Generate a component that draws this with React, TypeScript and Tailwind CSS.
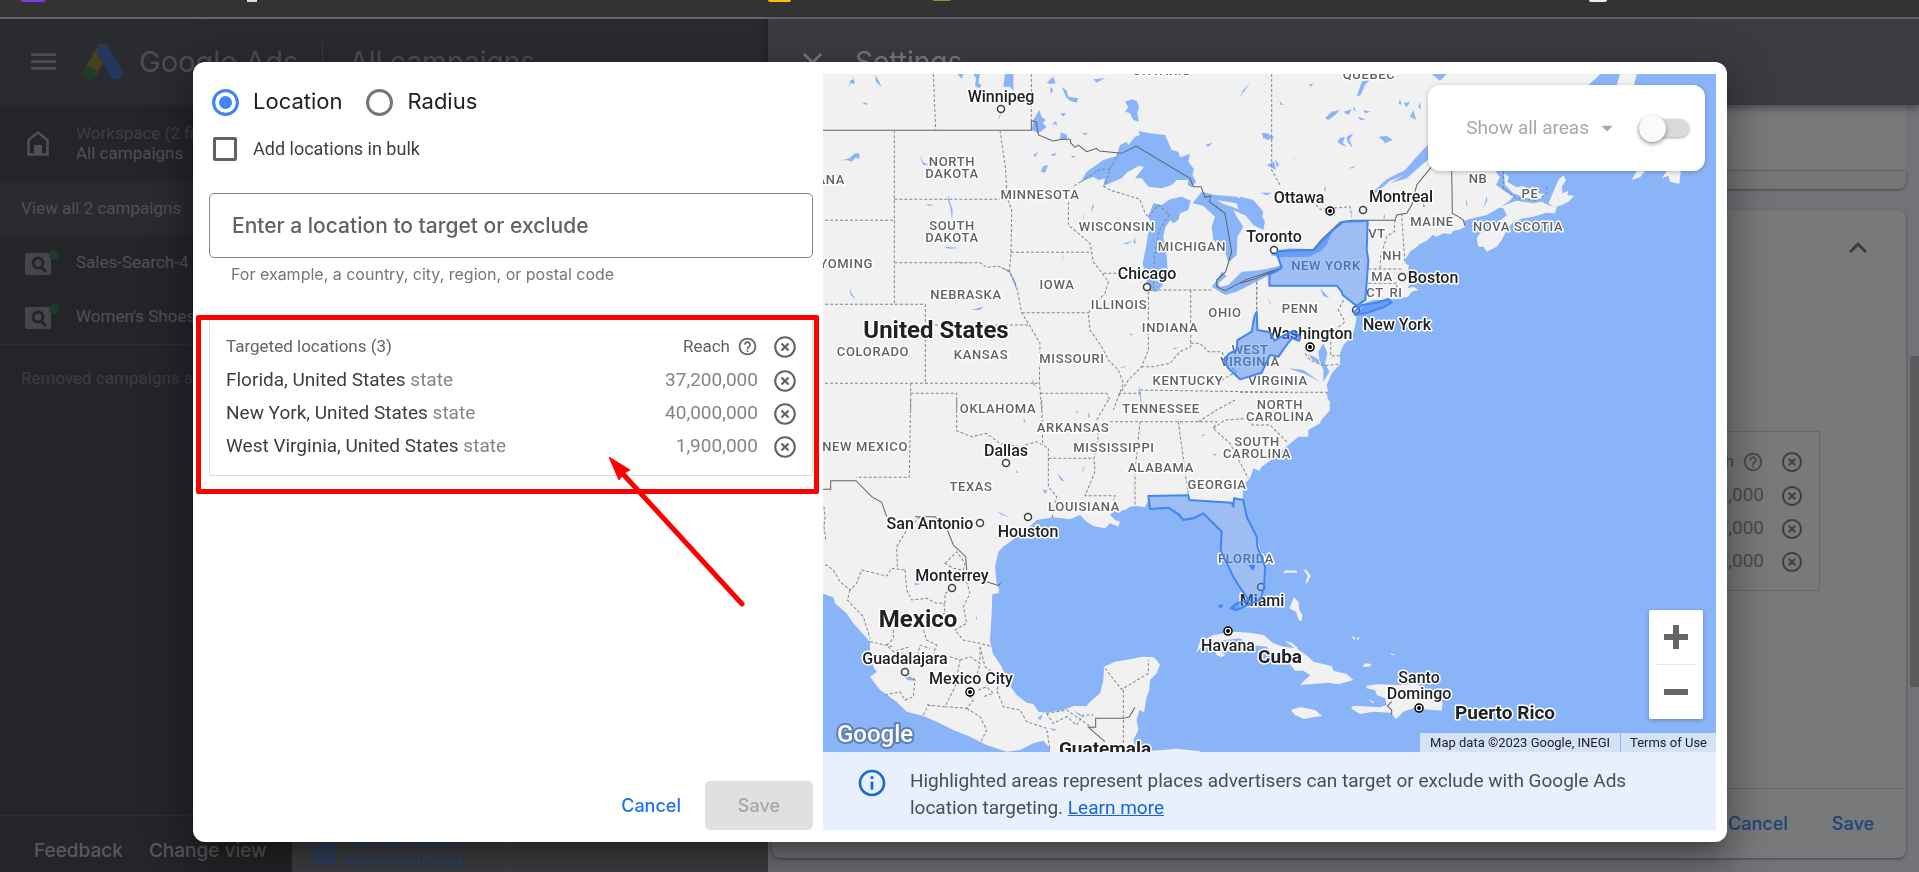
import { useState } from 'react'
import type { ReactNode } from 'react'
import {
	MdArrowDropDown,
	MdClose,
	MdExpandLess,
	MdHelpOutline,
	MdHighlightOff,
	MdInfoOutline,
	MdMenu,
} from 'react-icons/md'

type Label = { text: string; x: number; y: number; kind?: 'city' | 'island' | 'country'; anchor?: 'start' | 'middle' | 'end' }

const targeted = [
	{ name: 'Florida, United States', reach: '37,200,000' },
	{ name: 'New York, United States', reach: '40,000,000' },
	{ name: 'West Virginia, United States', reach: '1,900,000' },
]

const labels: Label[] = [
	{ text: 'QUEBEC', x: 546, y: 5 },
	{ text: 'ONTARIO', x: 339, y: 1 },
	{ text: 'MONTANA', x: 22, y: 110, anchor: 'end' },
	{ text: 'NORTH', x: 129, y: 92 },
	{ text: 'DAKOTA', x: 129, y: 104 },
	{ text: 'MINNESOTA', x: 217, y: 125 },
	{ text: 'SOUTH', x: 129, y: 156 },
	{ text: 'DAKOTA', x: 129, y: 168 },
	{ text: 'WISCONSIN', x: 294, y: 157 },
	{ text: 'MICHIGAN', x: 369, y: 177 },
	{ text: 'WYOMING', x: 50, y: 194, anchor: 'end' },
	{ text: 'IOWA', x: 234, y: 215 },
	{ text: 'NEBRASKA', x: 143, y: 225 },
	{ text: 'ILLINOIS', x: 296, y: 235 },
	{ text: 'OHIO', x: 402, y: 243 },
	{ text: 'INDIANA', x: 347, y: 258 },
	{ text: 'COLORADO', x: 50, y: 282 },
	{ text: 'KANSAS', x: 158, y: 285 },
	{ text: 'MISSOURI', x: 249, y: 289 },
	{ text: 'WEST', x: 427, y: 280 },
	{ text: 'VIRGINIA', x: 427, y: 292 },
	{ text: 'KENTUCKY', x: 365, y: 311 },
	{ text: 'VIRGINIA', x: 455, y: 311 },
	{ text: 'OKLAHOMA', x: 175, y: 339 },
	{ text: 'TENNESSEE', x: 338, y: 339 },
	{ text: 'ARKANSAS', x: 250, y: 358 },
	{ text: 'NEW MEXICO', x: 85, y: 377, anchor: 'end' },
	{ text: 'MISSISSIPPI', x: 291, y: 378 },
	{ text: 'ALABAMA', x: 338, y: 398 },
	{ text: 'GEORGIA', x: 394, y: 415 },
	{ text: 'TEXAS', x: 148, y: 417 },
	{ text: 'LOUISIANA', x: 261, y: 437 },
	{ text: 'NORTH', x: 457, y: 335 },
	{ text: 'CAROLINA', x: 457, y: 347 },
	{ text: 'SOUTH', x: 434, y: 372 },
	{ text: 'CAROLINA', x: 434, y: 384 },
	{ text: 'FLORIDA', x: 423, y: 489 },
	{ text: 'NEW YORK', x: 503, y: 196 },
	{ text: 'PENN', x: 477, y: 239 },
	{ text: 'MAINE', x: 609, y: 152 },
	{ text: 'VT', x: 554, y: 164 },
	{ text: 'NH', x: 569, y: 186 },
	{ text: 'MA', x: 559, y: 207 },
	{ text: 'CT', x: 552, y: 223 },
	{ text: 'RI', x: 573, y: 223 },
	{ text: 'NB', x: 655, y: 109 },
	{ text: 'PE', x: 707, y: 124 },
	{ text: 'NOVA SCOTIA', x: 695, y: 157 },
	{ text: 'Winnipeg', x: 178, y: 28, kind: 'city' },
	{ text: 'Chicago', x: 324, y: 205, kind: 'city' },
	{ text: 'Toronto', x: 451, y: 168, kind: 'city' },
	{ text: 'Ottawa', x: 476, y: 129, kind: 'city' },
	{ text: 'Montreal', x: 578, y: 128, kind: 'city' },
	{ text: 'Boston', x: 610, y: 209, kind: 'city' },
	{ text: 'New York', x: 574, y: 256, kind: 'city' },
	{ text: 'Washington', x: 487, y: 265, kind: 'city' },
	{ text: 'Dallas', x: 183, y: 382, kind: 'city' },
	{ text: 'San Antonio', x: 107, y: 455, kind: 'city' },
	{ text: 'Houston', x: 205, y: 463, kind: 'city' },
	{ text: 'Monterrey', x: 129, y: 507, kind: 'city' },
	{ text: 'Guadalajara', x: 82, y: 590, kind: 'city' },
	{ text: 'Mexico City', x: 148, y: 610, kind: 'city' },
	{ text: 'Miami', x: 439, y: 532, kind: 'city' },
	{ text: 'Havana', x: 405, y: 577, kind: 'city' },
	{ text: 'Santo', x: 596, y: 609, kind: 'city' },
	{ text: 'Domingo', x: 596, y: 625, kind: 'city' },
	{ text: 'Cuba', x: 457, y: 589, kind: 'island' },
	{ text: 'Puerto Rico', x: 682, y: 645, kind: 'island' },
	{ text: 'Guatemala', x: 282, y: 681, kind: 'island' },
	{ text: 'United States', x: 113, y: 264, kind: 'country' },
	{ text: 'Mexico', x: 95, y: 553, kind: 'country' },
]

const towns = [
	[178, 35], [324, 213], [451, 176], [540, 136], [579, 203], [533, 236], [183, 389],
	[157, 449], [205, 443], [129, 514], [82, 598], [438, 513],
]

const capitals = [[507, 137], [487, 273], [147, 618], [405, 557], [596, 634]]

const labelStyle = {
	state: 'fill-[#5f6368] text-[13px] font-medium tracking-wider',
	city: 'fill-[#202124] text-[16px] font-medium',
	island: 'fill-[#202124] text-[19px] font-bold',
	country: 'fill-[#202124] text-[24px] font-bold',
}

// The map is drawn in four sheets at triple scale, each with its own origin
const sheets = {
	nw: 'scale(.33333) translate(-9 -12)',
	ne: 'scale(.33333) translate(1251 -12)',
	sw: 'scale(.33333) translate(-9 978)',
	se: 'scale(.33333) translate(1131 978)',
}

const MapDrawing = () => (
	<svg viewBox="0 0 893 678" preserveAspectRatio="xMinYMin slice" className="absolute inset-0 h-full w-full bg-[#8ab4f8]" role="img" aria-label="Map of targeted locations">
		<g fill="#f1f1f1">
			<path transform={sheets.nw} d="M0 0H1400V1030H0Z" />
			<path transform={sheets.ne} d="M0 0H1090L1075 18 1045 45 700 140 575 210 565 225 545 268 500 310 450 340 500 325 545 285 600 240 740 290 765 303 780 322 768 345 792 362 820 380 805 395 775 415 740 435 690 447 672 452 677 470 655 480 640 482 632 492 610 490 590 500 578 495 560 512 540 522 528 532 510 545 495 570 497 582 507 585 500 615 510 640 503 655 520 650 535 660 515 665 505 680 480 685 440 690 400 690 375 700 365 715 350 735 345 770 335 800 310 825 300 850 300 883 275 910 260 945 265 967 232 985 270 992 268 1020 225 1030 245 1045 240 1060 205 1080V1100H0Z" />
			<path transform={sheets.ne} d="M775 412L830 392 880 400 905 395 925 405 950 412 945 430 920 428 880 440 850 445 820 455 800 480 785 510 770 530 740 545 730 530 715 530 710 505 720 490 760 470 800 435 790 415Z" />
			<path transform={sheets.ne} d="M970 316L978 330 965 350 968 370 985 362 982 375 1002 378 985 395 965 405 945 412 925 400 940 365 955 330ZM792 310L806 320 802 336 830 352 850 348 862 362 890 370 915 372 900 388 860 385 820 370 795 345ZM1140 12H1190L1182 45H1130ZM1215 303L1200 322 1175 330 1190 303ZM1280 303H1322L1318 342 1290 335 1285 318 1265 325Z" />
			<path transform={sheets.sw} d="M0 -20H1520L1530 30 1495 70 1460 90 1430 115 1405 135 1380 155 1360 175 1325 200 1318 212 1300 205 1290 235 1270 255 1268 300 1280 350 1310 410 1318 440 1335 500 1332 560 1320 600 1290 608 1285 595 1255 550 1235 525 1215 490 1202 450 1205 395 1185 370 1145 340 1120 350 1090 358 1080 340 1045 322 990 325 985 300 975 322 950 318 930 320 915 330 880 335 870 345 885 360 900 365 895 380 870 370 855 385 820 378 800 365 780 345 750 358 700 352 650 360 640 370 610 395 570 425 545 445 535 455 525 500 530 550 538 570 535 580 517 583 515 640 510 720 518 760 545 800 560 840 575 865 590 885 620 908 640 912 655 935 680 938 730 930 760 918 800 918 810 905 840 880 850 840 852 800 885 785 930 778 965 770 1000 772 1008 778 1020 795 1010 820 990 840 988 870 980 890 972 937 958 930 950 960 955 990 940 1020 945 1040 1000 1052 1070 1046 1140 1054V1070H690L690 1045 670 1022 640 1030 600 1050 560 1055 500 1035 450 1010 400 990 350 965 310 948 260 935 230 905 180 870 150 830 170 815 160 800 150 760 150 725 100 670 80 640 45 610 40 592 0 578Z" />
			<path transform={sheets.se} d="M-12 760L0 725 40 705 100 695 150 698 190 705 220 730 250 740 290 745 325 770 340 785 395 798 400 812 440 822 460 840 415 853 385 848 300 855 330 825 310 812 285 812 265 785 215 760 200 740 150 735 120 715 60 722 45 735 75 765 65 772 50 765 40 740 0 745ZM272 930L300 921 345 930 367 948 330 953 312 957 285 945ZM498 858L530 853 600 855 640 850 670 862 700 885 728 905 725 932 700 930 640 925 610 935 588 958 572 938 520 935 480 942 453 925 460 917 540 922 560 915 555 895 530 885 525 870 500 865ZM248 520L258 511 292 512 290 518 260 518ZM310 508L322 512 332 528 320 552 317 545 323 528ZM282 592L295 605 298 630 307 645 305 662 297 662 288 635 268 625ZM453 708L468 715 463 720ZM470 714L478 712 476 722ZM487 800L495 790 515 792 508 800ZM570 760L587 764 575 765ZM505 898L523 906 518 910ZM253 722L275 728 295 745 285 745Z" />
		</g>

		<g fill="#8ab4f8">
			<path transform={sheets.nw} d="M783 335L800 305 850 270 890 258 900 225 920 215 925 225 945 200 960 195 955 183 990 190 1035 195 1055 240 1075 245 1080 262 1110 252 1105 275 1122 298 1117 315 1128 335 1115 352 1103 345 1105 330 1070 330 1055 345 1025 355 985 350 965 325 945 325 972 290 955 288 920 308 905 325 850 348 855 325 835 330 820 320Z" />
			<path transform={sheets.nw} d="M985 662L968 580 980 520 990 450 985 440 1000 400 1025 405 1050 388 1085 380 1112 392 1105 420 1080 430 1075 450 1060 460 1050 450 1035 475 1030 500 1040 560 1043 600 1028 645 1010 665ZM1118 400L1145 365 1185 375 1250 380 1290 398 1300 415 1318 425 1335 455 1330 480 1300 465 1275 435 1240 420 1250 440 1270 470 1252 500 1250 555 1225 578 1215 545 1180 510 1175 470 1185 440 1150 408ZM1175 650L1195 625 1205 605 1220 618 1195 640 1200 650 1225 645 1265 605 1330 600 1385 585V598L1330 625 1290 645 1250 665 1215 675Z" />
			<path transform={sheets.nw} d="M915 95L935 88 950 92 957 110 952 130 957 155 940 150 930 130 915 125 925 112ZM413 12H430L425 27ZM460 12H480L475 40 485 45 478 55 465 48 468 25ZM555 12H580V62L570 50 550 50ZM545 118L540 140 533 152ZM640 150L658 120 665 140 677 150 668 160 680 170 655 190 635 180ZM725 50L740 62 745 80 775 85 770 98 750 92 738 82ZM680 38L700 20 707 40 690 42ZM690 50L700 60 692 72ZM720 130L738 130 730 140ZM695 165L708 152 712 168 705 162ZM722 187L742 195 740 210 720 208ZM785 190L802 188 798 196ZM820 28L855 25 830 38ZM125 98L142 98 140 106ZM85 52L92 30 105 28 88 20 102 25 104 42 92 40ZM165 15L175 30 185 52 168 35ZM60 272L88 265 105 250 118 250V268L108 262 95 275 80 270ZM300 255L308 275 325 285 310 285 303 270ZM384 375L388 390 398 420 396 450 391 410 384 392ZM315 402L342 404 330 408ZM372 530L420 534 385 536ZM640 255L655 245 645 262ZM662 305L670 288 685 285 675 308ZM690 255L708 248 705 258ZM752 258L768 258 760 264ZM818 402L822 408 812 430ZM790 425L792 450 789 440ZM910 520L938 512 920 523ZM945 500L947 522 940 518ZM725 548L732 570 728 565ZM540 590L570 602 588 640 590 662 570 610ZM405 572L440 582 420 580ZM452 720L490 710 480 720ZM88 650L95 670 108 690 92 675ZM635 925L648 950 640 945ZM900 893L922 886 910 893ZM955 945L962 970 966 1010 957 970ZM1055 835L1075 832 1065 838ZM930 790L938 792 932 798ZM1255 85L1290 38 1265 75ZM1325 188L1362 200 1355 206 1330 205ZM1155 225L1178 218 1165 230ZM1320 368L1355 368 1340 376ZM1340 285L1362 275 1368 300Z" />
			<path transform={sheets.ne} d="M0 635L60 600 120 590 115 605 85 618 40 628 0 655ZM90 555L108 545 150 535 220 538 245 510 275 490 260 525 240 545 205 560 120 562ZM565 222L548 268 500 312 450 332 405 372 390 398 402 362 440 328 495 300 530 260ZM350 80L365 35 400 18 375 45 362 75ZM575 12H620L600 32ZM65 190H85L90 200 103 205 80 210ZM415 200L440 198 458 210 435 220 430 212ZM325 295L345 288 340 295ZM475 100L480 88 485 105ZM490 100L510 95 500 112ZM505 150L520 120 528 150 512 140ZM540 95L542 120 535 110ZM292 215L300 205 315 200 308 218 320 230 305 225ZM320 200L340 190 328 210 335 225 338 235 322 215ZM255 145L275 125 300 120 285 135 265 150ZM310 125L335 118 325 135ZM340 105L348 125 340 120ZM355 140L378 148 360 150ZM370 120L392 125 375 130ZM205 45L220 40 212 50ZM118 92L130 105 122 105ZM100 55L125 105 108 72ZM0 70L30 38 12 62ZM0 380L40 390 70 425 60 470 30 440 0 430ZM105 268L118 285 110 290ZM162 260L165 265 163 270ZM255 345L258 365 252 360ZM550 390L555 410 548 412ZM432 430L436 440 430 450ZM678 385L683 410 678 405ZM740 378L742 390 730 415ZM250 820L262 850 255 880 268 905 250 935 250 900 238 870 235 845ZM205 852L235 868 240 885 215 868ZM145 895L190 900 240 935 195 912ZM240 655L268 685 250 678ZM82 682L95 705 88 698Z" />
			<path transform={sheets.sw} d="M668 268L682 272 675 282ZM712 220L735 245 722 240ZM785 215L797 193 790 212ZM528 332L568 352 545 345ZM610 50L618 68 612 66ZM765 35L778 35 770 40ZM805 35L810 48 804 55ZM588 210L595 218 588 218ZM1145 105L1155 102 1148 110ZM1178 162H1190L1185 168ZM283 550L305 552 285 556ZM468 645L472 660 468 658ZM255 832L285 835 282 842 262 840ZM318 910L340 920 322 916ZM652 955L668 942 662 960ZM688 985L712 988 700 992ZM760 930L800 955 775 945ZM548 440L568 430 555 445Z" />
		</g>
		<path transform={sheets.nw} fill="#f1f1f1" d="M1190 390L1250 400 1255 418 1235 410 1210 402Z" />

		<g fill="none" stroke="#5f6368" strokeWidth="3">
			<path transform={sheets.nw} d="M0 181H634V152L648 155 655 195 700 213 725 208 750 208 752 218 765 232 775 225 800 245 830 235 838 243 905 250 948 228 1110 325 1120 350 1143 350 1155 382 1172 378 1168 395 1215 430 1235 545 1217 605 1190 630V650L1215 662 1280 628 1380 595" />
			<path transform={sheets.ne} d="M0 640L40 628 122 595M110 545L220 538 243 510 300 457 335 451H465L470 435 500 430 515 405 530 345 575 290M635 303L637 430 655 440 670 450 675 468" />
			<path transform={sheets.sw} d="M0 268H32V242H108L155 290 185 307 200 350M285 350L345 350 380 385 400 435 437 470 440 510M500 545L535 556 542 550M855 1025L805 982H827V955H912L928 950 945 922" />
			<path transform={sheets.se} d="M575 905L562 918 575 930 575 945" />
		</g>

		<g fill="none" stroke="#80868b" strokeWidth="3" strokeDasharray="9 6">
			<path transform={sheets.nw} d="M340 12L347 180M634 12V150M223 181V703M0 451H223M223 388H545M540 181L556 290 562 385 575 420 573 547 568 605 590 650 605 728 628 765 660 820 658 940 661 970 665 1020M573 547H815L820 575 865 635 855 670 820 705 805 730 810 780 845 830 865 870 895 900 910 940 895 980 880 1020M223 578H480L500 592 535 588 568 605M0 703H316V940M345 765H625M605 728H805M0 940H660M272 940V1020M272 970H410V1020M661 970H860L870 990M783 335L765 345 745 400 745 465 810 520 820 575M850 348L870 360 960 388 975 430 985 440M985 665V840L965 890 925 930 895 980M1112 660V830L1080 845 1050 880 1000 890 965 890M985 660H1180M850 610H900M1310 620V725M1112 820L1140 820 1165 845 1205 845 1225 880M895 970H960V960L1400 967M895 250L870 298 855 345M870 298H840L783 335M985 440L1015 405 1048 435 1018 480 1003 560 1000 655M1355 12V300L1380 345M1225 885L1250 905 1195 935" />
			<path transform={sheets.ne} d="M228 405L240 418 330 410 335 440M50 620V725M485 430L487 470 495 580M465 450L462 485 440 500 422 560 420 595M385 597H490M385 640H470V660M310 690L295 720 315 755 290 775M272 800L272 857H300M0 967H268M195 850L210 870 250 887 295 883M790 303L790 355 830 385 890 392 920 370V345" />
			<path transform={sheets.sw} d="M272 0L268 232H108M410 0V92L455 110 500 100 540 130 600 140 650 125 685 145M665 0L668 130M685 145V260L710 290 695 358M685 175H822M865 0L830 60 835 110 822 175 825 215 795 287H885L880 310 900 330M870 65H1190L1180 85 1230 130 1285 235M960 65L945 215V320M1075 65L1105 285M1180 85L1215 60 1290 55 1297 75H1350L1405 130M1135 65L1190 30 1245 0" />
			<path transform={sheets.sw} d="M12 320L15 350 12 380 18 425M0 495H20L40 510 60 545 90 570 110 550 125 510 200 528 215 505 255 510M232 500L230 440 260 390 300 350M255 510L260 570 275 600 320 595 350 610 372 610 375 640 345 650M375 610V580L400 565M375 490L410 455 435 490 430 510 400 505ZM90 570L82 600 130 650 150 715M435 530L450 580 430 620 440 670 405 690 430 720 480 730 510 738M310 690L320 720 350 735 340 760M220 690V715L200 735 220 755 270 740M290 780L300 735 330 745M195 885L240 875 255 900 280 890 285 840 265 830M310 945L325 915 375 920 405 860 420 780 390 770M375 920L440 925 460 900 440 880M440 925L480 950 500 990 480 1030M420 780L450 770 480 790 470 830M480 740L495 800 545 835 530 870 550 920 600 930 620 965 680 985 690 1050M475 870L500 860 520 880 490 890M680 940L700 970 740 950 770 975 790 945 820 945M680 940L740 930 820 985M855 805L905 868 985 820V780M910 870V1030M150 725L220 740M480 740V780" />
		</g>

		{labels.map(({ text, x, y, kind = 'state', anchor = 'middle' }) => (
			<text key={`${text}${x}${y}`} x={x} y={y} textAnchor={anchor} stroke="#fff" strokeWidth="3" strokeLinejoin="round" paintOrder="stroke" className={labelStyle[kind]}>
				{text}
			</text>
		))}
		{towns.map(([x, y]) => (
			<circle key={`${x}-${y}`} cx={x} cy={y} r="3.5" fill="#fff" stroke="#3c4043" strokeWidth="1.5" />
		))}
		{capitals.map(([x, y]) => (
			<g key={`${x}-${y}`}>
				<circle cx={x} cy={y} r="4" fill="#fff" stroke="#000" strokeWidth="1.5" />
				<circle cx={x} cy={y} r="2" />
			</g>
		))}

		<g fill="#4285f4" fillOpacity=".48" stroke="#4285f4" strokeWidth="6" strokeLinejoin="round">
			<path transform={sheets.ne} d="M383 452L310 455 285 475 243 515 222 540 120 542 110 550 125 592 88 614V647H290L305 665 308 675 350 708 368 695 376 690 385 570 380 540ZM365 705L410 698 445 687 455 697 430 712 375 730 345 735 343 725Z" />
			<path transform={sheets.nw} d="M1310 725L1312 780 1350 787 1363 812 1385 800 1420 782 1440 800 1438 812 1415 805 1400 825 1375 860 1350 855 1325 908 1260 928 1225 895 1212 868 1228 850 1250 840 1252 810 1295 785 1303 740Z" />
			<path transform={sheets.sw} d="M985 288L1105 286 1108 300 1235 308 1240 320 1242 295 1270 300 1280 350 1310 410 1312 440 1335 500 1332 560 1322 598 1250 630 1232 625 1250 610 1285 600 1255 555 1240 530 1215 480 1202 450 1205 395 1150 340 1120 355 1090 360 1075 343 1045 323 990 327Z" />
			<path transform={sheets.sw} d="M1290 497L1302 497 1298 508ZM1197 618L1206 616 1203 621Z" />
		</g>
		<text x="14" y="668" stroke="#5f7fb5" strokeWidth="4" strokeLinejoin="round" paintOrder="stroke" className="fill-white text-[24px] font-medium">Google</text>
	</svg>
)

const Annotation = () => (
	<>
		<div className="pointer-events-none absolute -top-1 -right-[7px] -bottom-[19px] -left-[14px] rounded-xs border-5 border-[#ff0000]" />
		<svg viewBox="0 0 140 152" className="pointer-events-none absolute top-[138px] left-[399px] h-[152px] w-[140px]" aria-hidden="true">
			<path d="M14 17L133 147" stroke="#ff0000" strokeWidth="5" strokeLinecap="round" />
			<path d="M0 0L21 13 15 16 10 23Z" fill="#ff0000" stroke="#ff0000" />
		</svg>
	</>
)

const TargetedTable = () => (
	<table className="w-full text-[19px] text-[#3c4043]">
		<thead>
			<tr className="h-[35px] text-[17px] text-[#5f6368]">
				<th className="text-left font-normal">Targeted locations (3)</th>
				<th className="font-normal">
					<div className="flex items-center justify-end gap-[7px]">
						Reach
						<MdHelpOutline className="size-[21px]" />
					</div>
				</th>
				<th className="w-10">
					<button aria-label="Remove all" className="ml-[14px] flex">
						<MdHighlightOff className="size-[26px]" />
					</button>
				</th>
			</tr>
		</thead>
		<tbody>
			{targeted.map(({ name, reach }) => (
				<tr key={name} className="h-[33px]">
					<td>
						{name} <span className="text-[#80868b]">state</span>
					</td>
					<td className="text-right text-[#80868b]">{reach}</td>
					<td>
						<button aria-label={`Remove ${name}`} className="ml-[14px] flex text-[#5f6368]">
							<MdHighlightOff className="size-[26px]" />
						</button>
					</td>
				</tr>
			))}
		</tbody>
	</table>
)

const Choice = ({ label, checked, onChange }: { label: string; checked: boolean; onChange: () => void }) => (
	<label className="flex items-start gap-[14px] font-[Inter,sans-serif] text-[22px] leading-6 text-[#202124]">
		<input
			type="radio"
			name="mode"
			checked={checked}
			onChange={onChange}
			className="size-[27px] appearance-none rounded-full border-3 border-[#757575] checked:border-[#4285f4] checked:bg-[#4285f4] checked:shadow-[inset_0_0_0_4px_#fff]"
		/>
		{label}
	</label>
)

const LocationDialog = () => {
	const [mode, setMode] = useState('location')
	const [areas, setAreas] = useState(false)

	return (
		<div className="fixed inset-0 z-20 flex pt-[62px] pr-48 pb-[30px] pl-[193px]">
			<div role="dialog" aria-label="Locations" className="flex flex-1 rounded-xl bg-white shadow-[0_11px_15px_-7px_rgba(0,0,0,0.2),0_24px_38px_3px_rgba(0,0,0,0.2),0_9px_46px_8px_rgba(0,0,0,0.2)]">
				<section className="flex w-[41%] flex-col pt-[27px] pr-[9px] pb-3 pl-4">
					<div className="flex gap-6 pl-[3px]">
						<Choice label="Location" checked={mode === 'location'} onChange={() => setMode('location')} />
						<Choice label="Radius" checked={mode === 'radius'} onChange={() => setMode('radius')} />
					</div>
					<label className="mt-[21px] flex items-center gap-4 pl-1 text-[18px] leading-6 text-[#3c4043]">
						<input type="checkbox" className="size-6 appearance-none rounded-xs border-3 border-[#5f6368] checked:bg-[#4285f4]" />
						Add locations in bulk
					</label>
					<input
						aria-label="Location"
						aria-describedby="location-hint"
						placeholder="Enter a location to target or exclude"
						className="mt-8 h-[65px] w-full rounded-[5px] border border-[#80868b] px-[22px] font-[Inter,sans-serif] text-[21px] font-medium placeholder:text-[#5f6368]"
					/>
					<p id="location-hint" className="mt-[6px] pl-[22px] font-[Inter,sans-serif] text-[16px] leading-5 text-[#757575]">
						For example, a country, city, region, or postal code
					</p>
					<div className="relative mt-[34px] border border-[#dadce0] pt-[10px] pr-[14px] pb-3 pl-4">
						<TargetedTable />
						<Annotation />
					</div>
					<div className="mt-auto flex justify-end font-[Inter,sans-serif] text-[18px] font-medium">
						<button className="px-6 text-[#1a73e8]">Cancel</button>
						<button disabled className="h-[49px] w-[108px] rounded-[5px] bg-[#dfe1e0] text-[#a5a7a6]">Save</button>
					</div>
				</section>

				<section className="flex flex-1 flex-col py-3 pr-[11px] pl-px">
					<div className="relative flex-1 overflow-hidden">
						<MapDrawing />
						<div className="absolute top-[11px] right-[11px] flex h-[86px] items-center rounded-xl bg-white pr-4 pl-[38px] text-[19px] text-[#a8a8a8] shadow-[0_1px_4px_rgba(0,0,0,0.25)]">
							<button className="flex items-center gap-1">
								Show all areas
								<MdArrowDropDown className="size-7" />
							</button>
							<label className="relative ml-[18px] flex h-[27px] w-[50px] items-center">
								<input type="checkbox" role="switch" aria-label="Show all areas" checked={areas} onChange={() => setAreas(!areas)} className="peer h-[18px] w-full appearance-none rounded-full bg-[#d8d9dc] shadow-[0_1px_3px_rgba(0,0,0,0.35)]" />
								<span className="absolute left-0 size-[27px] rounded-full bg-[#fafafa] shadow-[0_2px_4px_rgba(0,0,0,0.4)] peer-checked:left-6" />
							</label>
						</div>
						<div className="absolute right-[13px] bottom-[33px] flex w-[54px] flex-col items-center rounded-xs bg-white text-[#666666] shadow-[0_1px_4px_rgba(0,0,0,0.3)]">
							<button aria-label="Zoom in" className="flex h-[54px] w-full items-center justify-center">
								<svg viewBox="0 0 24 24" className="size-6"><path d="M9 0h6v9h9v6h-9v9H9v-9H0V9h9z" fill="currentColor" /></svg>
							</button>
							<span className="h-px w-[41px] bg-[#e6e6e6]" />
							<button aria-label="Zoom out" className="flex h-[54px] w-full items-center justify-center">
								<svg viewBox="0 0 24 24" className="size-6"><path d="M0 9h24v6H0z" fill="currentColor" /></svg>
							</button>
						</div>
						<div className="absolute right-0 bottom-0 flex gap-px text-[13px] leading-[19px] text-[#202124]">
							<span className="bg-[#d5e1f5] px-[10px]">Map data ©2023 Google, INEGI</span>
							<a href="#terms" className="bg-[#d5e1f5] px-[9px]">Terms of Use</a>
						</div>
					</div>
					<div className="flex h-[78px] gap-[22px] bg-[#e8effd] pt-[15px] pl-[33px] text-[19px] leading-[27px] text-[#4a4d51]">
						<MdInfoOutline className="size-8 shrink-0 text-[#1967d2]" />
						<p>
							Highlighted areas represent places advertisers can target or exclude with Google Ads
							<br />
							location targeting. <a href="#learn" className="text-[#1967d2] underline">Learn more</a>
						</p>
					</div>
				</section>
			</div>
		</div>
	)
}

const CampaignLink = ({ children }: { children: ReactNode }) => (
	<a href="#campaign" className="flex h-[54px] items-center gap-[25px] pl-[25px] text-[17px] whitespace-nowrap">
		<svg viewBox="0 0 36 26" className="-mr-[10px] h-[26px] w-9 shrink-0" aria-hidden="true">
			<rect y="3" width="26" height="22" rx="2" fill="#45464a" />
			<circle cx="13" cy="13" r="5" fill="none" stroke="#242528" strokeWidth="3" />
			<path d="M16 17L21 22" stroke="#242528" strokeWidth="3" />
			<circle cx="29" cy="5" r="5" fill="#1e3a2c" />
		</svg>
		{children}
	</a>
)

const Sidebar = () => (
	<nav className="flex w-[292px] flex-col bg-[#242528] text-[17px] text-[#505155]">
		<div className="flex h-[76px] items-center gap-[27px] pl-[27px] leading-5">
			<svg viewBox="0 0 22 25" className="h-[25px] w-[22px]" aria-hidden="true">
				<path d="M1.5 23.500V9L11 1.500 20.500 9V23.500Z" fill="none" stroke="currentColor" strokeWidth="2.500" />
				<path d="M7 14h8v10H7z" fill="currentColor" />
			</svg>
			<div className="whitespace-nowrap">
				<p className="text-[#3d3e42]">Workspace (2 filters)</p>
				<p>All campaigns</p>
			</div>
		</div>
		<a href="#all" className="flex h-[55px] items-center bg-[#2a2b2f] pl-[21px]">View all 2 campaigns</a>
		<CampaignLink>Sales-Search-4</CampaignLink>
		<CampaignLink>Women's Shoes</CampaignLink>
		<p className="flex h-[68px] items-center border-t border-[#2d2e31] pl-[21px] whitespace-nowrap text-[#3c3d40]">Removed campaigns are hidden</p>
		<div className="mt-auto flex h-[57px] items-center gap-[26px] border-t border-[#2d2e31] pt-[14px] pl-[34px] font-[Inter,sans-serif] text-[19px] font-medium text-[#58595c]">
			<button>Feedback</button>
			<button>Change view</button>
		</div>
	</nav>
)

const SettingsPanel = () => (
	<section className="flex flex-1 flex-col bg-[#727377]">
		<header className="z-10 flex h-[86px] items-start gap-[26px] bg-[#3a3c40] pt-6 pl-7 font-[Inter,sans-serif] text-[28px] leading-[38px] text-[#77797b] shadow-[0_3px_8px_rgba(0,0,0,0.4)]">
			<MdClose className="mt-[3px] size-[33px]" />
			<h2>Settings</h2>
		</header>
		<div className="flex min-h-0 flex-1">
			<div className="flex flex-1 flex-col pb-[14px] pl-1">
				<div className="h-[66px] shrink-0 border-b border-[#67686b] bg-[#78797b]" />
				<div className="h-[18px] shrink-0 rounded-b-lg bg-[#757678] shadow-[0_1px_3px_rgba(0,0,0,0.4)]" />
				<div className="mt-[21px] flex flex-1 flex-col rounded-lg bg-[#78797b] shadow-[0_1px_3px_rgba(0,0,0,0.4)]">
					<button aria-label="Collapse" className="mt-[20px] mr-[30px] flex self-end text-[#3b3c3f]">
						<MdExpandLess className="size-9" />
					</button>
					<div className="mt-[165px] mr-[86px] h-[160px] w-[400px] self-end border border-[#666769] pt-3 pr-[15px] pl-4 text-[#494a4d]">
						<div className="flex h-[35px] items-center justify-end gap-2 text-[17px]">
							Reach <MdHelpOutline className="size-[22px]" />
							<MdHighlightOff className="ml-2 size-6 text-[#3f4043]" />
						</div>
						{targeted.map(({ reach }) => (
							<div key={reach} className="flex h-[33px] items-center justify-end gap-4 text-[19px]">
								{reach}
								<MdHighlightOff className="size-6 text-[#3f4043]" />
							</div>
						))}
					</div>
					<div className="mt-auto flex h-[70px] items-center justify-end gap-11 border-t border-[#67686b] pr-8 font-[Inter,sans-serif] text-[18px] font-medium text-[#1f4479]">
						<button>Cancel</button>
						<button>Save</button>
					</div>
				</div>
			</div>
			<div className="w-[13px] pt-[251px] pl-1">
				<div className="h-[331px] bg-[#5a5b5d]" />
			</div>
		</div>
	</section>
)

const App = () => (
	<div className="flex h-screen flex-col overflow-hidden bg-[#404144] font-[Roboto,'Liberation_Sans',sans-serif]">
		<div className="flex h-[19px] shrink-0 items-start border-b-2 border-[#666666] bg-[#333333]">
			<span className="ml-[21px] h-[2px] w-6 rounded-b bg-[#7c3aed]" />
			<span className="ml-[202px] h-[2px] w-[10px] bg-[#dddddd]" />
			<span className="ml-[511px] h-[2px] w-[23px] rounded-b bg-[#fbbc04]" />
			<span className="ml-[142px] h-px w-[17px] bg-[#a08a2a]" />
			<span className="ml-[639px] h-[2px] w-[18px] rounded-b bg-[#eeeeee]" />
		</div>
		<div className="flex min-h-0 flex-1">
			<div className="flex w-[768px] flex-col">
				<header className="flex h-[86px] shrink-0 items-start bg-[#2a2b2f] pt-6 pl-[27px] font-[Inter,sans-serif] text-[29px] leading-[38px] text-[#4d4e52]">
					<button aria-label="Menu"><MdMenu className="mt-[2px] size-[33px]" /></button>
					<svg viewBox="0 0 40 36" className="mt-px ml-[23px] h-9 w-10" aria-hidden="true">
						<path d="M7 29L20 6" stroke="#4a3f1c" strokeWidth="13" strokeLinecap="round" />
						<path d="M20 7L33 29" stroke="#25375c" strokeWidth="13" strokeLinecap="round" />
						<circle cx="7" cy="29" r="6.500" fill="#1f3e2a" />
					</svg>
					<h1 className="ml-4">Google Ads</h1>
					<span className="ml-6 h-9 w-px bg-[#3c3d40]" />
					<p className="ml-[26px] text-[28px]">All campaigns</p>
				</header>
				<div className="flex min-h-0 flex-1">
					<Sidebar />
					<main className="flex flex-1 items-end">
						<a href="#app" className="flex items-end gap-3 border-r border-[#48494c] pr-[45px] pb-[2px] pl-[22px] text-[17px] leading-[19px] text-[#264575]">
							<svg viewBox="0 0 20 34" className="mb-[6px] h-[34px] w-5" aria-hidden="true">
								<rect x="1.500" y="1.500" width="17" height="31" rx="3" fill="none" stroke="currentColor" strokeWidth="3" />
								<path d="M2 27H18M10 10V20M6 16L10 21 14 16" fill="none" stroke="currentColor" strokeWidth="3" />
							</svg>
							<span>Get the Google<br />Ads mobile app</span>
						</a>
					</main>
				</div>
			</div>
			<SettingsPanel />
		</div>
		<LocationDialog />
	</div>
)

export default App
